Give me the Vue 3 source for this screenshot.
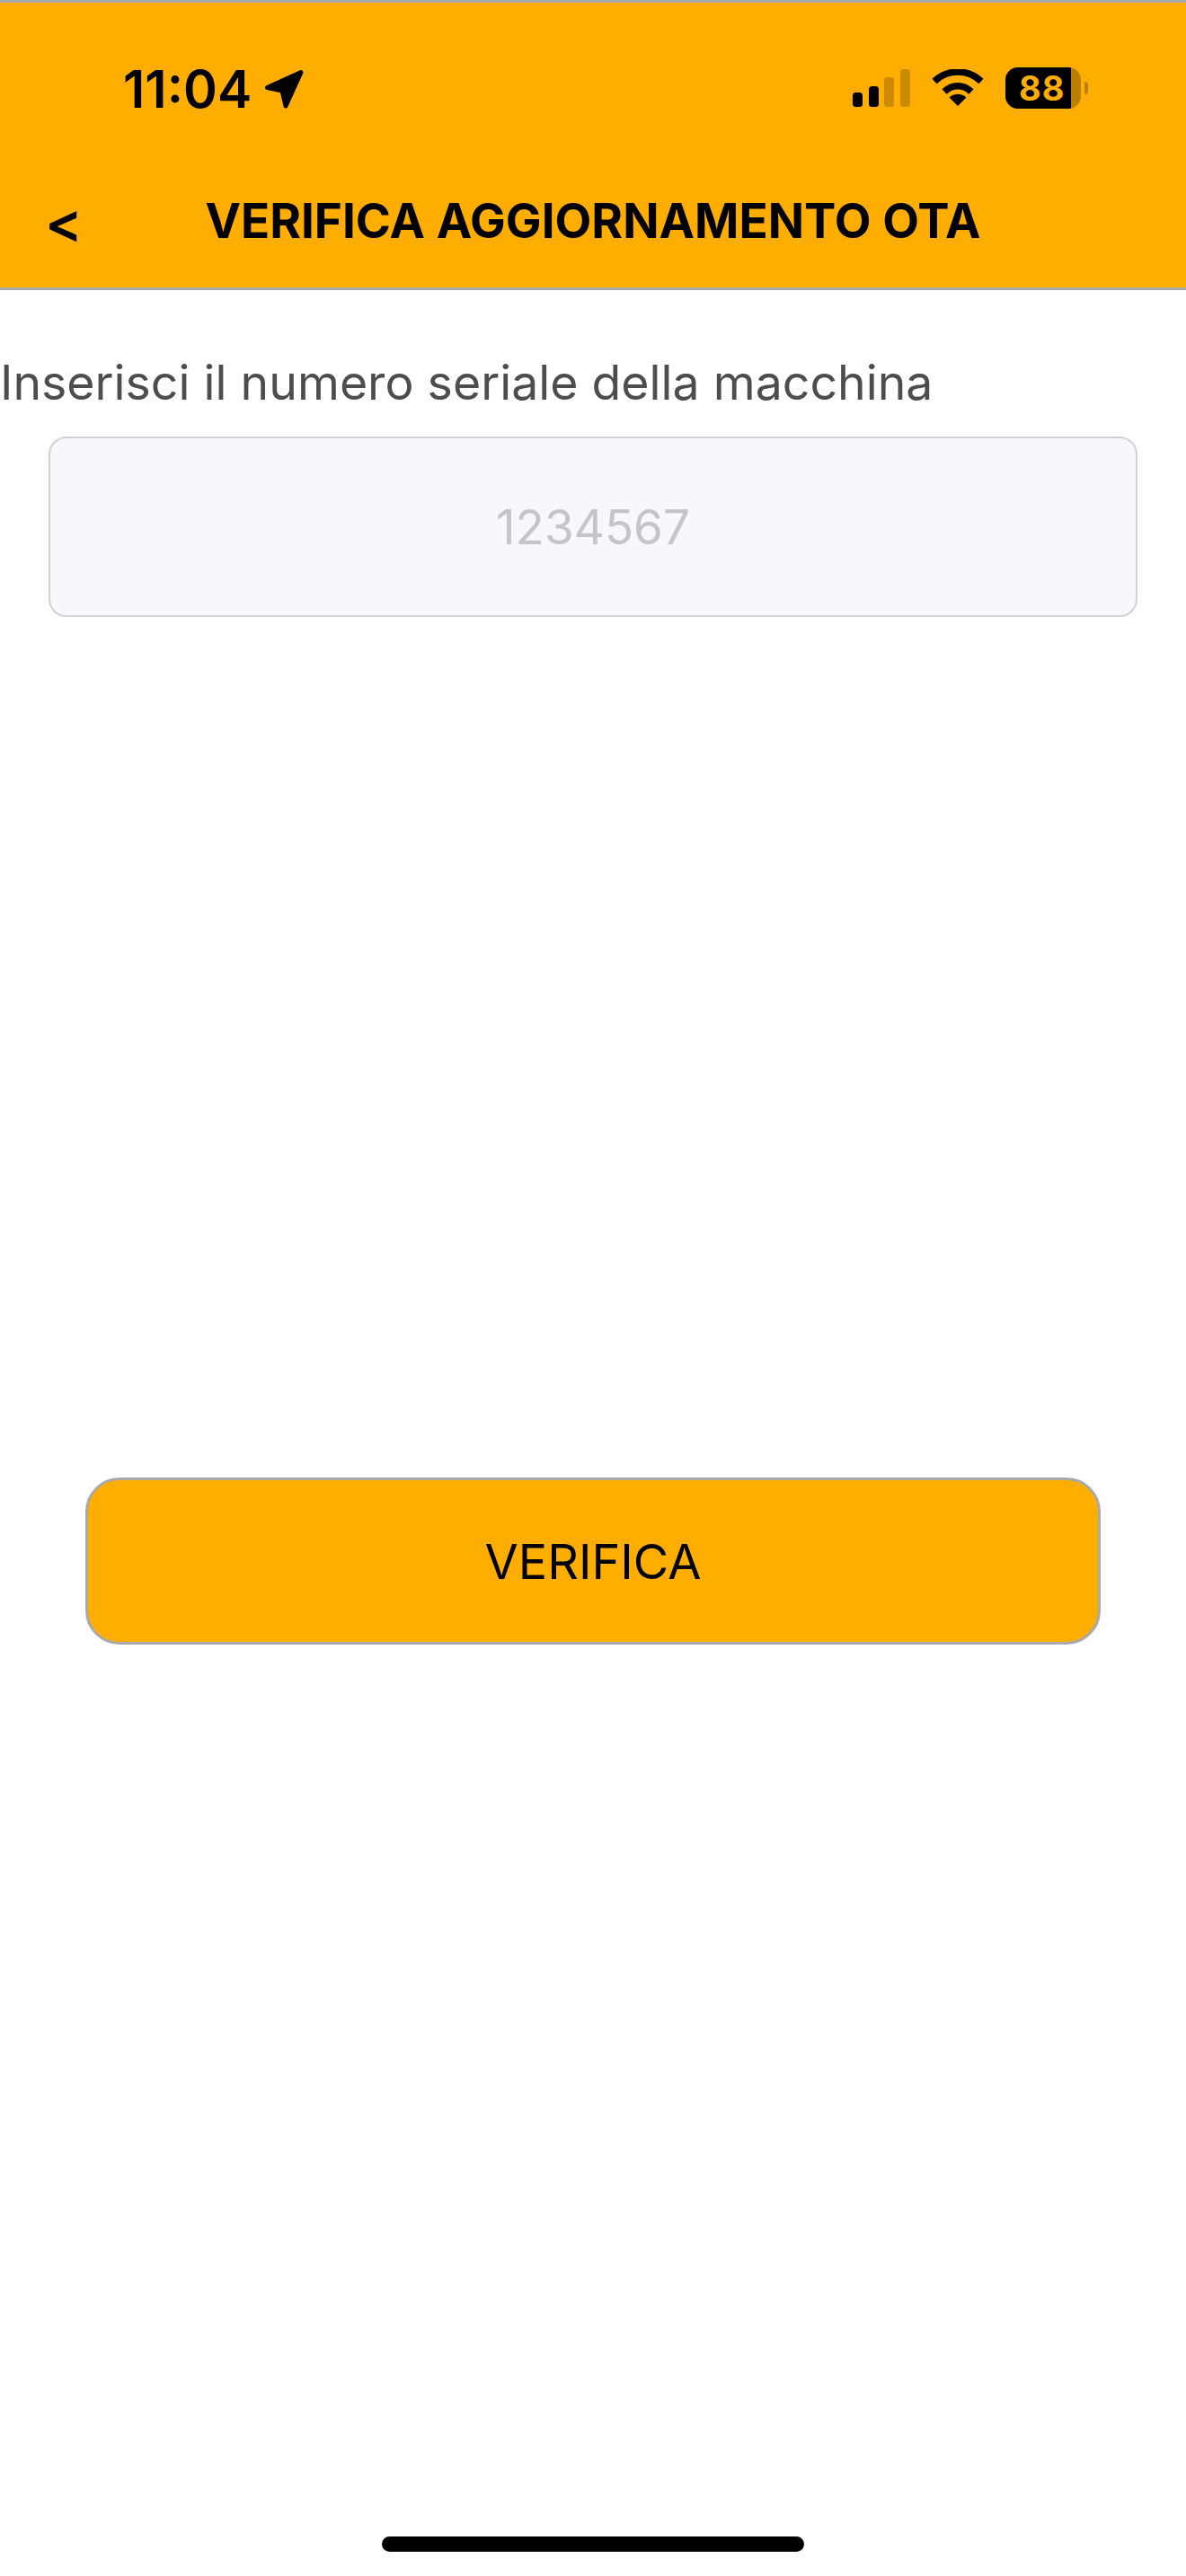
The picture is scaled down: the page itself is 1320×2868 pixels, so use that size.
<script setup>
const title = 'VERIFICA AGGIORNAMENTO OTA'
</script>

<template>
  <div class="page">
    <header class="header">
      <div class="status">
        <div class="time">
          <span>11:04</span>
          <svg class="arrow" viewBox="0 0 44 44" width="44" height="44">
            <path d="M3.500 20.500 41 3.500 24 41 20 24Z" fill="#000" stroke="#000" stroke-width="5" stroke-linejoin="round" />
          </svg>
        </div>
        <div class="indicators">
          <svg viewBox="0 0 64 42" width="64" height="42" class="signal">
            <rect x="0" y="26" width="11" height="16" rx="3.500" fill="#000" />
            <rect x="18" y="19" width="11" height="23" rx="3.500" fill="#000" />
            <rect x="35" y="9" width="11" height="33" rx="3.500" fill="#000" opacity=".2" />
            <rect x="53" y="0" width="11" height="42" rx="3.500" fill="#000" opacity=".2" />
          </svg>
          <svg viewBox="0 0 58 42" width="58" height="42" class="wifi">
            <path d="M3 13.500C18-.5 40-.5 55 13.500" fill="none" stroke="#000" stroke-width="7.500" />
            <path d="M14 25C23 16.500 35 16.500 44 25" fill="none" stroke="#000" stroke-width="7.500" />
            <path d="M29 41 19.500 31.500C25 26.500 33 26.500 38.500 31.500Z" fill="#000" />
          </svg>
          <div class="battery">
            <div class="battery-body">
              <span class="battery-level">88</span>
            </div>
            <span class="battery-cap"></span>
          </div>
        </div>
      </div>
      <div class="nav">
        <span class="back">&lt;</span>
        <h1 class="title">{{ title }}</h1>
      </div>
    </header>

    <main class="content">
      <p class="label">Inserisci il numero seriale della macchina</p>
      <div class="field">1234567</div>
      <button class="action" type="button">VERIFICA</button>
    </main>

    <div class="home-bar"></div>
  </div>
</template>

<style>
html, body { margin: 0; background: #fff; }
</style>

<style scoped>
.page {
  width: 1320px;
  height: 2868px;
  display: flex;
  flex-direction: column;
  font-family: Inter, "Liberation Sans", sans-serif;
  color: #000;
  background: #fff;
  overflow: hidden;
}
.header {
  height: 317px;
  box-sizing: content-box;
  background: #ffae00;
  border-top: 3px solid #a9a9a9;
  border-bottom: 3px solid #a9a9a9;
  display: flex;
  flex-direction: column;
  flex-shrink: 0;
}
.status {
  height: 190px;
  padding: 71px 109px 0 137px;
  box-sizing: border-box;
  display: flex;
  justify-content: space-between;
  align-items: flex-start;
}
.time {
  display: flex;
  align-items: center;
  gap: 14px;
  font-size: 57.500px;
  font-weight: 600;
  line-height: 50px;
}
.arrow { display: block; }
.indicators {
  display: flex;
  align-items: flex-start;
  gap: 24px;
  padding-top: 3px;
}
.signal, .wifi { display: block; }
.battery { display: flex; align-items: center; gap: 4px; margin-top: -2px; }
.battery-body {
  width: 84px;
  height: 46px;
  border-radius: 14px;
  box-sizing: border-box;
  background: linear-gradient(90deg, #000 0 87%, #bc8000 87% 100%);
  display: flex;
  align-items: center;
  padding-left: 15px;
}
.battery-level {
  color: #ffae00;
  font-size: 38px;
  font-weight: 700;
  line-height: 46px;
  letter-spacing: 1px;
}
.battery-cap {
  width: 4px;
  height: 14px;
  background: #bc8000;
  border-radius: 0 8px 8px 0;
}
.nav {
  position: relative;
  display: flex;
  justify-content: center;
  padding-top: 22px;
}
.back {
  position: absolute;
  left: 50px;
  top: 25px;
  font-size: 62px;
  font-weight: 600;
  line-height: 60px;
}
.title {
  margin: 0;
  font-size: 53px;
  font-weight: 700;
  line-height: 62px;
  white-space: nowrap;
}
.content {
  display: flex;
  flex-direction: column;
}
.label {
  margin: 0;
  padding-top: 71px;
  font-size: 53.600px;
  line-height: 64px;
  color: #4d4d4d;
  white-space: nowrap;
}
.field {
  margin: 28px 54px 0;
  height: 201px;
  box-sizing: border-box;
  border: 2px solid #d2d2d6;
  border-radius: 20px;
  background: #f8f8fc;
  color: #c4c4c9;
  font-size: 53px;
  display: flex;
  align-items: center;
  justify-content: center;
}
.action {
  margin: 958px 95px 0;
  height: 186px;
  border: 3px solid #a9a9a9;
  border-radius: 38px;
  background: #ffae00;
  color: #000;
  font: 400 54px Inter, "Liberation Sans", sans-serif;
  padding: 0;
}
.home-bar {
  position: absolute;
  left: 425px;
  top: 2824px;
  width: 470px;
  height: 17px;
  border-radius: 9px;
  background: #000;
}
</style>
